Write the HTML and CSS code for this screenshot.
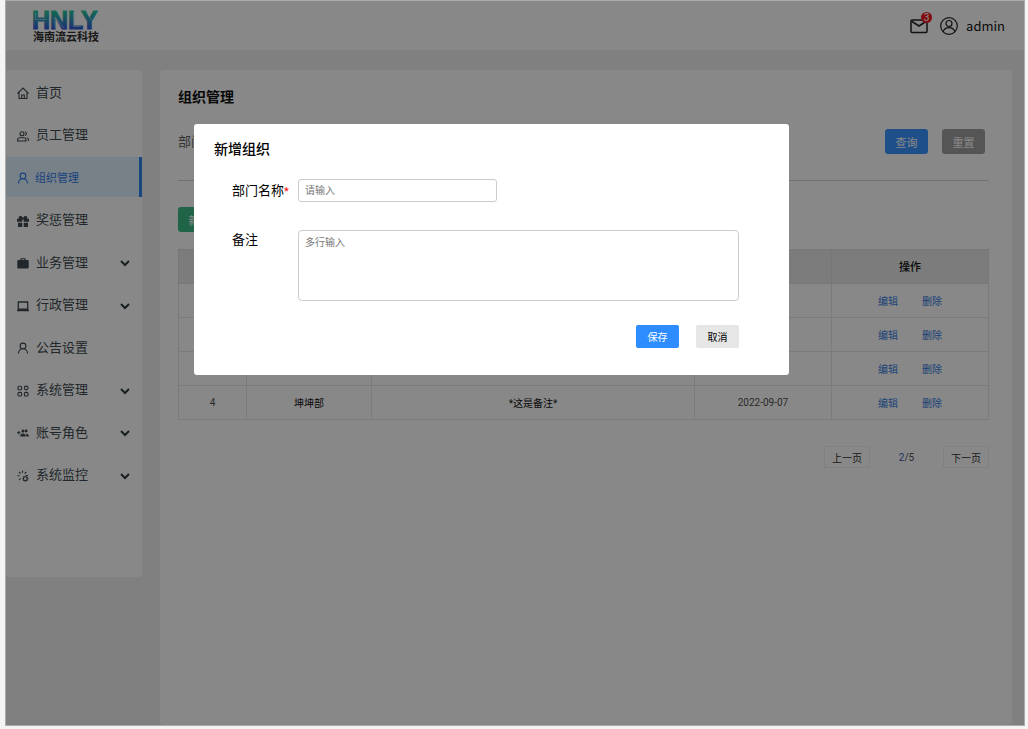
FILE: index.html
```html
<!DOCTYPE html>
<html lang="zh-CN">
<head>
<meta charset="utf-8">
<title>组织管理</title>
<link rel="stylesheet" href="styles.css">
</head>
<body>
<div class="app">
  <header class="topbar">
    <div class="logo">
      <svg class="logo-mark" viewBox="0 0 70 20" role="img" aria-label="HNLY">
        <defs><linearGradient id="brand" x1="0" y1="0" x2="0" y2="20" gradientUnits="userSpaceOnUse"><stop offset="0" stop-color="#10c890"/><stop offset=".45" stop-color="#1f90b0"/><stop offset="1" stop-color="#2048d8"/></linearGradient></defs>
        <text class="logo-text" x="0" y="19" fill="url(#brand)" stroke="url(#brand)">HNLY</text>
        <path d="M3.500 3v6.500h11M23 18V7l9 11M41.500 2v14.500h7M54 2l6 8.500" fill="none" stroke="#fff" stroke-opacity=".7" stroke-width=".6"/>
      </svg>
      <span class="logo-name">海南流云科技</span>
    </div>
    <div class="user">
      <button class="mail" type="button" aria-label="消息">
        <svg width="18" height="16" viewBox="0 0 18 16" fill="none" stroke="#111" stroke-width="1.500"><rect x="1" y="2" width="16" height="12.500" rx="1"/><path d="M2 3.500l7 4.500 7-4.500"/></svg>
        <span class="badge">3</span>
      </button>
      <svg width="18" height="18" viewBox="0 0 18 18" fill="none" stroke="#111" stroke-width="1.200"><circle cx="9" cy="9" r="8.300"/><circle cx="9" cy="6.500" r="3"/><path d="M3.200 14.700c.8-2.500 3-4 5.800-4s5 1.500 5.800 4"/></svg>
      <span class="user-name">admin</span>
    </div>
  </header>
  <div class="body">
    <nav class="sidebar">
      <ul class="menu">
        <li><a class="item" href="#"><svg class="icon" viewBox="0 0 12 12"><path d="M.5 6.500L6 1l5.500 5.500M2 5.500v6h8v-6M4.700 11.500V8h2.600v3.500"/></svg><span>首页</span></a></li>
        <li><a class="item" href="#"><svg class="icon" viewBox="0 0 12 12"><circle cx="5" cy="3.700" r="2"/><path d="M.6 11V9.800c0-1.300 1-2 2.200-2h4c1.200 0 2.200.7 2.200 2V11zM8 1.800a2 2 0 0 1 0 3.800M10.200 7.800c.8.400 1.200 1 1.200 2V11"/></svg><span>员工管理</span></a></li>
        <li><a class="item active" href="#"><svg class="icon" viewBox="0 0 12 12"><circle cx="6" cy="4" r="2.900"/><path d="M1.500 11.500c.2-2.600 1.700-4.300 3.500-4.700M10.500 11.500c-.2-2.600-1.700-4.300-3.500-4.700"/></svg><span>组织管理</span></a></li>
        <li><a class="item" href="#"><svg class="icon solid" viewBox="0 0 12 12"><path d="M0 3.800h2C1 2 2.200.6 3.700 1 5 1.300 5.500 2.200 6 3c.5-.8 1-1.700 2.300-2C9.800.6 11 2 10 3.800h2v3H6.700V4.500H5.300v2.300H0zM1 7.800h4.300V12H1zM6.700 7.800H11V12H6.700z"/></svg><span>奖惩管理</span></a></li>
        <li><a class="item" href="#"><svg class="icon solid" viewBox="0 0 12 12"><path d="M3.500 3V1.200h5V3h2.300c.5 0 .9.400.9.900v6.700c0 .5-.4.900-.9.900H1.200c-.5 0-.9-.4-.9-.9V3.900c0-.5.4-.9.900-.9zm1.200 0h2.600v-.8H4.700z"/></svg><span>业务管理</span><svg class="chevron" viewBox="0 0 10 8"><path d="M1 2l4 4 4-4"/></svg></a></li>
        <li><a class="item" href="#"><svg class="icon" viewBox="0 0 12 12"><path d="M1.300 2h9.400v7.200H1.300zM0 10.500h12" stroke-width="1.300"/></svg><span>行政管理</span><svg class="chevron" viewBox="0 0 10 8"><path d="M1 2l4 4 4-4"/></svg></a></li>
        <li><a class="item" href="#"><svg class="icon" viewBox="0 0 12 12"><circle cx="6" cy="4" r="2.900"/><path d="M1.500 11.500c.2-2.600 1.700-4.300 3.500-4.700M10.500 11.500c-.2-2.600-1.700-4.300-3.500-4.700"/></svg><span>公告设置</span></a></li>
        <li><a class="item" href="#"><svg class="icon" viewBox="0 0 12 12"><rect x="1" y="1.200" width="3.600" height="3.600" rx="1"/><circle cx="9.200" cy="3" r="1.900"/><rect x="1" y="7.400" width="3.600" height="3.600" rx="1"/><rect x="7.400" y="7.400" width="3.600" height="3.600" rx="1"/></svg><span>系统管理</span><svg class="chevron" viewBox="0 0 10 8"><path d="M1 2l4 4 4-4"/></svg></a></li>
        <li><a class="item" href="#"><svg class="icon solid" viewBox="0 0 12 12"><path d="M0 5.300h1.300V4h1v1.300h1.300v1H2.300v1.300h-1V6.300H0z"/><circle cx="6" cy="4" r="1.600"/><circle cx="9.200" cy="4" r="1.400"/><path d="M3.200 9.500c0-2 1.200-3 2.800-3s2.800 1 2.800 3zM9.400 9.500c0-1.200-.3-2-.9-2.800 1.800-.2 3.300.5 3.500 2.800z"/></svg><span>账号角色</span><svg class="chevron" viewBox="0 0 10 8"><path d="M1 2l4 4 4-4"/></svg></a></li>
        <li><a class="item" href="#"><svg class="icon" viewBox="0 0 12 12"><path d="M5.500.5v2.300M2 2l1.500 1.500M9.200 2L7.700 3.500M.3 5.700h2.300M2 10l1.500-1.700M9 5.500h2"/><circle cx="8.300" cy="8.700" r="1.900"/><path d="M8.300 5.800v1M8.300 10.600v1.200M5.300 8.700h1.200M10.200 8.700h1.400M6.300 6.700l.8.800M10.400 6.700l-.8.800M6.300 10.800l.8-.8M10.400 10.800l-.8-.8"/></svg><span>系统监控</span><svg class="chevron" viewBox="0 0 10 8"><path d="M1 2l4 4 4-4"/></svg></a></li>
      </ul>
    </nav>
    <main class="main">
      <h1 class="title">组织管理</h1>
      <div class="filters">
        <span class="filter-label">部门</span>
        <button class="btn blue" type="button">查询</button>
        <button class="btn gray" type="button">重置</button>
      </div>
      <div class="tools"><button class="btn green" type="button">新增</button></div>
      <table class="table">
        <colgroup><col class="c-no"><col class="c-name"><col class="c-note"><col class="c-date"><col class="c-act"></colgroup>
        <thead><tr><th></th><th></th><th></th><th></th><th>操作</th></tr></thead>
        <tbody>
          <tr><td></td><td></td><td></td><td></td><td><a href="#">编辑</a><a href="#">删除</a></td></tr>
          <tr><td></td><td></td><td></td><td></td><td><a href="#">编辑</a><a href="#">删除</a></td></tr>
          <tr><td></td><td></td><td></td><td></td><td><a href="#">编辑</a><a href="#">删除</a></td></tr>
          <tr><td class="soft">4</td><td>坤坤部</td><td>*这是备注*</td><td class="soft">2022-09-07</td><td><a href="#">编辑</a><a href="#">删除</a></td></tr>
        </tbody>
      </table>
      <div class="pager">
        <button class="page" type="button">上一页</button>
        <span class="count"><span class="current">2</span>/5</span>
        <button class="page" type="button">下一页</button>
      </div>
    </main>
  </div>
  <div class="overlay">
    <form class="modal" role="dialog" aria-labelledby="dialog-title">
      <h2 class="modal-title" id="dialog-title">新增组织</h2>
      <div class="fields">
        <label class="label" for="name">部门名称<span class="required">*</span></label>
        <input class="control name" id="name" type="text" placeholder="请输入">
        <label class="label note-label" for="note">备注</label>
        <textarea class="control note" id="note" placeholder="多行输入"></textarea>
      </div>
      <div class="actions">
        <button class="action save" type="button">保存</button>
        <button class="action cancel" type="button">取消</button>
      </div>
    </form>
  </div>
</div>
</body>
</html>
```
FILE: styles.css
```css
* { box-sizing: border-box; }
body {
  margin: 0;
  padding: 0 3px 3px 5px;
  height: 100vh;
  background: #f4f4f4;
  color: #000;
  font-family: Roboto, "Noto Sans CJK SC", sans-serif;
  font-size: 10px;
}
button, input, textarea { font: inherit; }
button { border: 0; padding: 0; cursor: pointer; }
a { text-decoration: none; }
.app {
  position: relative;
  display: flex;
  flex-direction: column;
  height: 100%;
  border: 1px solid #aaa;
  background: #efefef;
}
.topbar {
  display: flex;
  justify-content: space-between;
  align-items: center;
  height: 49px;
  flex: none;
  padding: 0 19px 0 26px;
  background: #fff;
}
.logo { display: flex; flex-direction: column; gap: 2px; width: 70px; padding-top: 1px; }
.logo-mark { width: 70px; height: 20px; overflow: visible; }
.logo-text { font: bold 25px "Liberation Sans", Arial, sans-serif; stroke-width: 1; }
.logo-name { padding-left: 1px; color: #222; font-size: 11px; line-height: 11px; font-weight: 700; white-space: nowrap; }
.user { display: flex; align-items: center; gap: 12px; }
.user svg { display: block; }
.user-name { margin-left: -4px; font-family: "Noto Sans CJK SC", sans-serif; font-size: 13px; }
.mail { position: relative; background: none; }
.badge {
  position: absolute;
  top: -6px;
  right: -4px;
  width: 11px;
  height: 11px;
  border-radius: 50%;
  background: #f00510;
  color: #fff;
  font-size: 10px;
  line-height: 11px;
}
.body {
  display: flex;
  flex: 1;
  min-height: 0;
  gap: 18px;
  padding: 20px 12px 0 0;
}
.sidebar {
  width: 136px;
  height: 507px;
  flex: none;
  padding-top: 2px;
  border-radius: 3px;
  background: #fff;
}
.menu {
  display: flex;
  flex-direction: column;
  justify-content: space-between;
  height: 423px;
  margin: 0;
  padding: 0;
  list-style: none;
}
.item {
  display: flex;
  align-items: center;
  gap: 7px;
  height: 40px;
  padding: 0 12px 0 11px;
  color: #303d44;
  font-size: 13px;
}
.item span { padding-bottom: 2px; }
.item.active {
  gap: 6px;
  padding-right: 9px;
  border-right: 3px solid #1c7de8;
  background: #def1ff;
  color: #1c72e8;
  font-size: 11px;
}
.item.active span { padding: 0; }
.icon {
  width: 12px;
  height: 12px;
  margin-top: 2px;
  fill: none;
  stroke: currentColor;
  stroke-width: 1.1;
}
.solid { fill: currentColor; stroke: none; }
.chevron {
  width: 10px;
  height: 8px;
  margin: 2px 0 0 auto;
  fill: none;
  stroke: #222d32;
  stroke-width: 2;
}
.main {
  flex: 1;
  min-width: 0;
  padding: 17px 23px 0 18px;
  border-radius: 4px;
  background: #fff;
}
.title { margin: 0; font-size: 14px; line-height: 20px; font-weight: 700; }
.filters {
  display: flex;
  gap: 14px;
  height: 74px;
  padding: 22px 4px 0 0;
  border-bottom: 1px solid #d0d0d0;
}
.filter-label { flex: 1; color: #555; font-size: 13px; line-height: 25px; }
.btn { width: 43px; height: 25px; border-radius: 3px; color: #fff; font-size: 11px; }
.blue { background: #2d8cff; }
.gray { background: #999; }
.green { background: #2eb67d; }
.tools { padding: 26px 0 17px; }
.table {
  width: 100%;
  border-collapse: collapse;
  table-layout: fixed;
  text-align: center;
}
.c-no { width: 68px; }
.c-name { width: 125px; }
.c-date { width: 137px; }
.c-act { width: 157px; }
.table th, .table td { height: 34px; padding: 0 0 1px; border: 1px solid #e4e4e4; }
.table th { background: #e6e6e6; border-color: #dcdcdc; font-size: 11px; font-weight: 500; }
.table a { color: #2470dc; }
.table a + a { margin-left: 24px; }
.table .soft { color: #444; }
.pager { display: flex; justify-content: flex-end; align-items: center; padding-top: 26px; }
.page { width: 46px; height: 22px; border: 1px solid #f0f0f0; background: none; color: #222; }
.count { width: 73px; text-align: center; color: #444; }
.current { color: #2c4da8; }
.overlay {
  position: absolute;
  inset: 0;
  padding: 123px 0 0 188px;
  background: rgba(17, 17, 17, .5);
}
.modal {
  width: 595px;
  max-width: 100%;
  padding: 15px 50px 27px 20px;
  border-radius: 3px;
  background: #fff;
}
.modal-title { margin: 0; font-size: 14px; line-height: 20px; font-weight: 500; }
.fields {
  display: grid;
  grid-template-columns: 66px 1fr;
  row-gap: 27px;
  padding: 20px 0 0 18px;
}
.label { font-size: 13px; line-height: 23px; white-space: nowrap; }
.note-label { line-height: 19px; }
.required { color: #f00; font-size: 11px; }
.control {
  display: block;
  width: 100%;
  padding: 0 6px;
  border: 1px solid #ccc;
  border-radius: 3px;
  outline: 0;
  resize: none;
}
.control::placeholder { color: #777; }
.name { width: 199px; height: 23px; }
.note { height: 71px; padding-top: 3px; border-radius: 4px; }
.actions { display: flex; justify-content: flex-end; gap: 17px; padding-top: 24px; }
.action { width: 43px; height: 23px; border-radius: 2px; }
.save { background: #2d8cff; color: #fff; }
.cancel { background: #e6e6e6; color: #000; }
```
